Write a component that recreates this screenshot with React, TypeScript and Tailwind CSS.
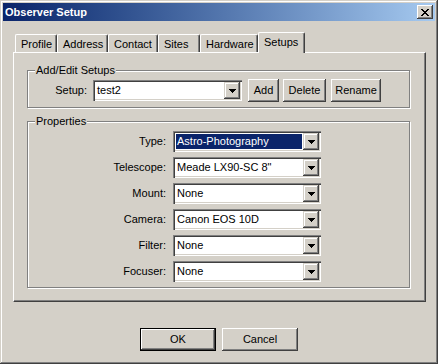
import React from "react";

const raised =
  "shadow-[inset_-1px_-1px_#404040,inset_1px_1px_#ffffff,inset_-2px_-2px_#808080,inset_2px_2px_#d4d0c8]";
const sunken =
  "shadow-[inset_1px_1px_#808080,inset_2px_2px_#404040,inset_-1px_-1px_#ffffff,inset_-2px_-2px_#d4d0c8]";

interface ComboProps {
  value: string;
  width: string;
  selected?: boolean;
}

const Combo: React.FC<ComboProps> = ({ value, width, selected }) => (
  <div className={`h-[21px] bg-white flex p-[2px] ${width} ${sunken}`}>
    <div className="flex-1 flex p-[1px] min-w-0">
      <span
        className={`flex-1 flex items-center pl-[1px] leading-none whitespace-nowrap overflow-hidden ${
          selected ? "bg-[#0a246a] text-white" : ""
        }`}
      >
        {value}
      </span>
    </div>
    <div
      className={`w-[16px] h-full bg-[#d4d0c8] flex items-center justify-center shadow-[inset_-1px_-1px_#404040,inset_1px_1px_#d4d0c8,inset_-2px_-2px_#808080,inset_2px_2px_#ffffff]`}
    >
      <svg width="7" height="4" viewBox="0 0 7 4" className="mt-[1px]">
        <path d="M0 0h7v1H0zM1 1h5v1H1zM2 2h3v1H2zM3 3h1v1H3z" fill="#000" />
      </svg>
    </div>
  </div>
);

const Button: React.FC<{ label: string; width: string; isDefault?: boolean }> = ({
  label,
  width,
  isDefault,
}) => (
  <div
    className={`h-[23px] ${width} flex items-center justify-center bg-[#d4d0c8] ${
      isDefault ? "border border-black" : ""
    } ${raised}`}
  >
    {label}
  </div>
);

const GroupBox: React.FC<{
  title: string;
  className: string;
  children: React.ReactNode;
}> = ({ title, className, children }) => (
  <div
    className={`relative border border-[#808080] shadow-[inset_1px_1px_#ffffff,1px_1px_#ffffff] ${className}`}
  >
    <span className="absolute left-[7px] top-[-7px] px-[1px] bg-[#d4d0c8] leading-[12px]">
      {title}
    </span>
    {children}
  </div>
);

const tabs = [
  { name: "Profile", w: "w-[42px]" },
  { name: "Address", w: "w-[51px]" },
  { name: "Contact", w: "w-[50px]" },
  { name: "Sites", w: "w-[42px]" },
  { name: "Hardware", w: "w-[58px]" },
  { name: "Setups", w: "w-[47px]", active: true },
];

const properties = [
  { label: "Type:", value: "Astro-Photography", selected: true },
  { label: "Telescope:", value: 'Meade LX90-SC 8"' },
  { label: "Mount:", value: "None" },
  { label: "Camera:", value: "Canon EOS 10D" },
  { label: "Filter:", value: "None" },
  { label: "Focuser:", value: "None" },
];

export default function App() {
  return (
    <div className="w-[438px] h-[364px] bg-[#d4d0c8] p-[3px] flex flex-col font-['Liberation_Sans',Arial,sans-serif] text-[11px] text-black shadow-[inset_-1px_-1px_#404040,inset_1px_1px_#d4d0c8,inset_-2px_-2px_#808080,inset_2px_2px_#ffffff]">
      {/* Title bar */}
      <div className="h-[18px] flex items-center justify-between pl-[2px] pr-[2px] bg-gradient-to-r from-[#0a246a] to-[#a6caf0]">
        <span className="text-white font-bold text-[11px] leading-none">Observer Setup</span>
        <div className={`w-[16px] h-[14px] bg-[#d4d0c8] flex items-center justify-center ${raised}`}>
          <svg width="8" height="7" viewBox="0 0 8 7">
            <path
              d="M0 0h2v1H0zM6 0h2v1H6zM1 1h2v1H1zM5 1h2v1H5zM2 2h4v1H2zM3 3h2v1H3zM2 4h4v1H2zM1 5h2v1H1zM5 5h2v1H5zM0 6h2v1H0zM6 6h2v1H6z"
              fill="#000"
            />
          </svg>
        </div>
      </div>

      {/* Tabs */}
      <div className="ml-[10px] mt-[11px]">
        <div className="flex items-end h-[20px] pl-[2px]">
          {tabs.map((t) =>
            t.active ? (
              <div
                key={t.name}
                className={`${t.w} h-[21px] -mb-[1px] relative z-10 bg-[#d4d0c8] border-l border-t border-white border-r border-r-[#404040] rounded-t-[2px] shadow-[inset_-1px_0_#808080] pl-[5px] pt-[3px] leading-[12px]`}
              >
                {t.name}
              </div>
            ) : (
              <div
                key={t.name}
                className={`${t.w} h-[18px] bg-[#d4d0c8] border-l border-t border-white border-r border-r-[#404040] rounded-t-[2px] shadow-[inset_-1px_0_#808080] pl-[5px] pt-[3px] leading-[12px]`}
              >
                {t.name}
              </div>
            )
          )}
        </div>

        {/* Panel */}
        <div className="w-[413px] h-[250px] border-l border-t border-white border-r border-b border-r-[#404040] border-b-[#404040] shadow-[inset_-1px_-1px_#808080] pl-[13px] pt-[17px]">
          <GroupBox title="Add/Edit Setups" className="w-[383px] h-[38px] flex items-center pt-[3px]">
            <span className="w-[59px] text-right">Setup:</span>
            <div className="ml-[6px]">
              <Combo value="test2" width="w-[149px]" />
            </div>
            <div className="ml-[6px] flex">
              <Button label="Add" width="w-[31px]" />
              <div className="ml-[4px]">
                <Button label="Delete" width="w-[43px]" />
              </div>
              <div className="ml-[5px]">
                <Button label="Rename" width="w-[50px]" />
              </div>
            </div>
          </GroupBox>

          <GroupBox title="Properties" className="w-[383px] h-[167px] mt-[13px] pt-[9px]">
            <div className="flex flex-col gap-[5px]">
              {properties.map((p) => (
                <div key={p.label} className="flex items-center">
                  <span className="w-[138px] text-right">{p.label}</span>
                  <div className="ml-[7px]">
                    <Combo value={p.value} width="w-[148px]" selected={p.selected} />
                  </div>
                </div>
              ))}
            </div>
          </GroupBox>
        </div>
      </div>

      {/* Dialog buttons */}
      <div className="flex justify-center gap-[6px] mt-[26px]">
        <Button label="OK" width="w-[76px]" isDefault />
        <Button label="Cancel" width="w-[76px]" />
      </div>
    </div>
  );
}
